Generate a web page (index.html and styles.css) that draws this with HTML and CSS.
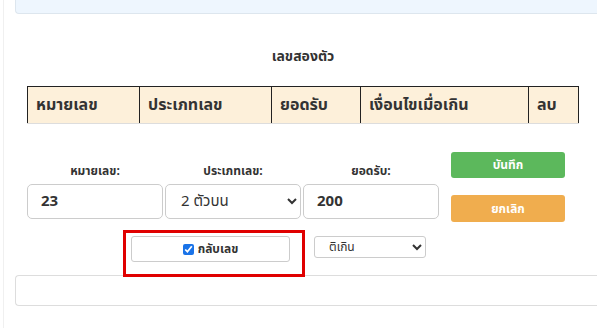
FILE: index.html
```html
<!DOCTYPE html>
<html lang="th">
<head>
  <meta charset="UTF-8" />
  <meta name="viewport" content="width=device-width, initial-scale=1.0" />
  <title>เลขสองตัว</title>
  <link rel="stylesheet" href="styles.css">
</head>
<body>
  <div class="page">
    <div class="notice"></div>

    <div class="panel">
      <h2 class="title">เลขสองตัว</h2>

      <table class="number-table">
        <thead>
          <tr>
            <th class="col-num">หมายเลข</th>
            <th class="col-type">ประเภทเลข</th>
            <th class="col-amount">ยอดรับ</th>
            <th class="col-cond">เงื่อนไขเมื่อเกิน</th>
            <th class="col-del">ลบ</th>
          </tr>
        </thead>
      </table>

      <div class="form">
        <div class="fields">
          <label class="field-label" for="num">หมายเลข:</label>
          <label class="field-label" for="type">ประเภทเลข:</label>
          <label class="field-label" for="amount">ยอดรับ:</label>
          <input class="field-input bold" id="num" type="text" value="23">
          <select class="field-input" id="type">
            <option>2 ตัวบน</option>
            <option>2 ตัวล่าง</option>
          </select>
          <input class="field-input bold" id="amount" type="text" value="200">
        </div>
        <div class="actions">
          <button class="btn btn-save">บันทึก</button>
          <button class="btn btn-cancel">ยกเลิก</button>
        </div>
      </div>

      <div class="extra-row">
        <div class="highlight">
          <label class="reverse-box">
            <input type="checkbox" checked>
            <span>กลับเลข</span>
          </label>
        </div>
        <select class="over-select">
          <option>ติเกิน</option>
          <option>ไม่รับ</option>
        </select>
      </div>
    </div>

    <div class="result-box"></div>
  </div>
</body>
</html>
```

FILE: styles.css
```css
* {
  margin: 0;
  padding: 0;
  box-sizing: border-box;
  font-family: Tahoma, "Noto Sans Thai", "Noto Sans", "DejaVu Sans", sans-serif;
}
body {
  background: #fff;
  color: #333;
  overflow: hidden;
}
.page {
  margin-left: 3px;
  padding-left: 11px;
  border-left: 1px solid #f0f0f0;
  height: 328px;
  overflow: hidden;
}
.notice {
  height: 14px;
  margin-right: -20px;
  background: #eef6fe;
  border: 1px solid #dde6ee;
  border-top: none;
  border-right: none;
  border-radius: 0 0 0 4px;
}
.panel {
  width: 576px;
  padding: 0 12px;
}
.title {
  text-align: center;
  font-size: 14px;
  font-weight: 700;
  line-height: 18px;
  margin-top: 34px;
  margin-bottom: 20px;
}
.number-table {
  width: 100%;
  border-collapse: collapse;
}
.number-table th {
  background: #fdf0da;
  height: 37px;
  padding: 0 8px;
  text-align: left;
  font-size: 16px;
  font-weight: 700;
  color: #333;
  border-top: 1px solid #222;
  border-left: 1px solid #222;
  border-right: 1px solid #222;
  border-bottom: 1px solid #ddd;
}
.col-num { width: 112px; }
.col-type { width: 132px; }
.col-amount { width: 89px; }
.col-cond { width: 168px; }
.form {
  display: flex;
  gap: 12px;
  margin-top: 28px;
}
.fields {
  display: grid;
  grid-template-columns: repeat(3, 136px);
  column-gap: 2px;
}
.field-label {
  text-align: center;
  font-size: 12px;
  font-weight: 700;
  line-height: 18px;
  padding-top: 10px;
  margin-bottom: 1px;
}
.field-input {
  height: 35px;
  border: 1px solid #ccc;
  border-radius: 5px;
  padding: 0 13px;
  font-size: 15px;
  color: #333;
  background: #fff;
  outline: none;
}
.field-input.bold {
  font-weight: 700;
}
select.field-input {
  padding-left: 11px;
}
.actions {
  display: flex;
  flex-direction: column;
  gap: 17px;
  width: 114px;
}
.btn {
  height: 26px;
  border: none;
  border-radius: 3px;
  color: #fff;
  font-size: 12px;
  font-weight: 700;
  cursor: pointer;
}
.btn-save {
  background: #5cb85c;
}
.btn-cancel {
  height: 27px;
  background: #f0ad4e;
}
.extra-row {
  display: flex;
  align-items: flex-start;
  gap: 9px;
  margin-top: 8px;
  margin-left: 96px;
  position: relative;
  z-index: 1;
}
.highlight {
  border: 3px solid #e00000;
  padding: 3px 12px 12px 5px;
  width: 182px;
}
.reverse-box {
  display: flex;
  align-items: center;
  justify-content: center;
  gap: 4px;
  height: 26px;
  border: 1px solid #ccc;
  border-radius: 3px;
  background: #fff;
  font-size: 12px;
  font-weight: 700;
}
.reverse-box input {
  width: 11px;
  height: 11px;
  accent-color: #1a73e8;
}
.over-select {
  margin-top: 6px;
  width: 112px;
  height: 22px;
  border: 1px solid #ccc;
  border-radius: 3px;
  padding-left: 10px;
  font-size: 12px;
  color: #333;
  background: #fff;
}
.result-box {
  margin-top: -2px;
  margin-right: -20px;
  height: 31px;
  border: 1px solid #ddd;
  border-right: none;
  border-radius: 4px 0 0 4px;
}
```
